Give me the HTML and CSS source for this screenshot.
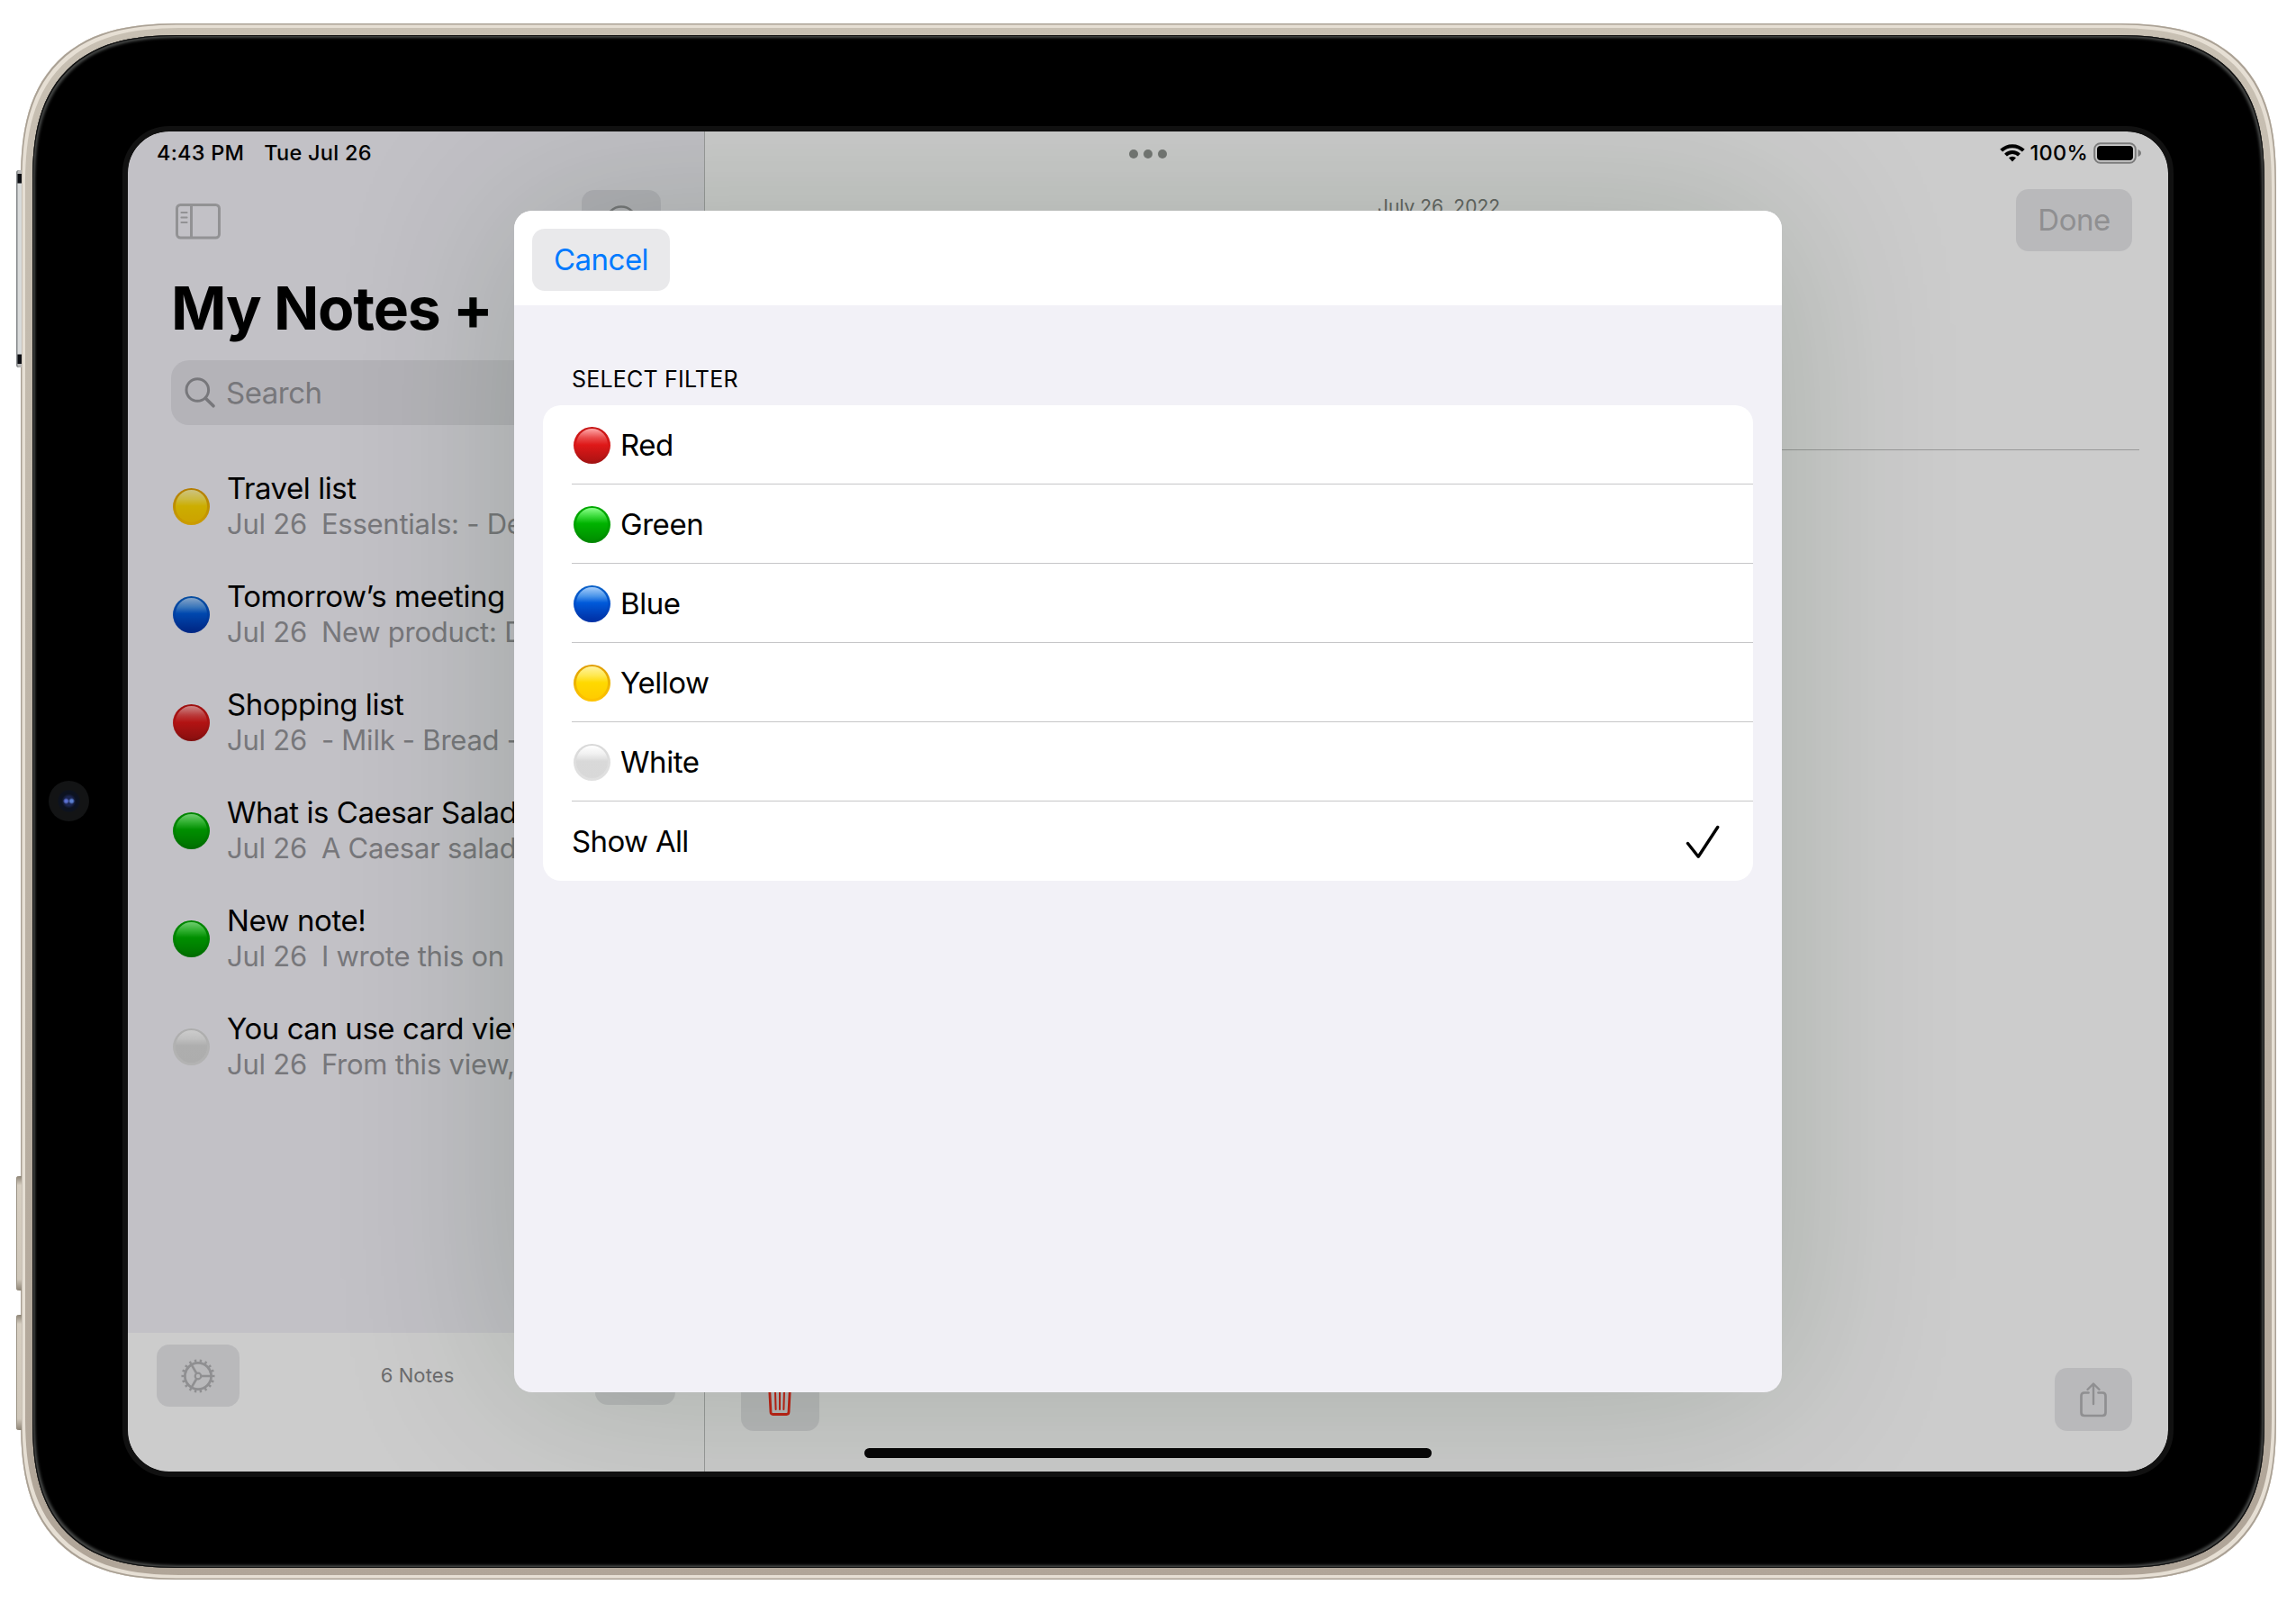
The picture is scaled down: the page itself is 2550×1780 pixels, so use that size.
FILE: index.html
```html
<!DOCTYPE html>
<html lang="en">
<head>
<meta charset="utf-8">
<title>My Notes +</title>
<link rel="stylesheet" href="styles.css">
</head>
<body>
<div class="device">
  <i class="side-key key-power"></i>
  <i class="side-key key-vol-up"></i>
  <i class="side-key key-vol-down"></i>
  <div class="glass">
    <i class="camera"></i>
    <div class="screen">
      <aside class="sidebar">
        <div class="sidebar-bar">
          <svg class="icon-sidebar" width="50" height="40" viewBox="0 0 50 40" fill="none" stroke="currentColor" stroke-width="3">
            <rect x="1.5" y="1.5" width="47" height="36.5" rx="4"/>
            <path d="M17.5 1.5v36.5"/>
            <path d="M6.500 10h6M6.500 15.500h6M6.500 21h6" stroke-width="2.200" stroke-linecap="round"/>
          </svg>
          <span class="tool tool-more">
            <svg width="38" height="38" viewBox="0 0 38 38" fill="none" stroke="currentColor" stroke-width="2.6"><circle cx="19" cy="19" r="16.5"/><path d="M11 19h.1M19 19h.1M27 19h.1" stroke-width="4" stroke-linecap="round"/></svg>
          </span>
        </div>
        <h1 class="title">My Notes +</h1>
        <div class="search">
          <svg width="36" height="36" viewBox="0 0 36 36" fill="none" stroke="currentColor" stroke-width="3" stroke-linecap="round"><circle cx="15.3" cy="15" r="12.3"/><path d="M24.3 24.2l8.7 8.6" stroke-width="3.6"/></svg>
          <span>Search</span>
        </div>
        <ul class="notes">
          <li><i class="ball yellow"></i><div><p class="note-title">Travel list</p><p class="note-sub"><span>Jul 26</span>Essentials: - Deodorant</p></div></li>
          <li><i class="ball blue"></i><div><p class="note-title">Tomorrow’s meeting</p><p class="note-sub"><span>Jul 26</span>New product: Design</p></div></li>
          <li><i class="ball red"></i><div><p class="note-title">Shopping list</p><p class="note-sub"><span>Jul 26</span>- Milk - Bread - Eggs</p></div></li>
          <li><i class="ball green"></i><div><p class="note-title">What is Caesar Salad?</p><p class="note-sub"><span>Jul 26</span>A Caesar salad is</p></div></li>
          <li><i class="ball green"></i><div><p class="note-title">New note!</p><p class="note-sub"><span>Jul 26</span>I wrote this on</p></div></li>
          <li><i class="ball white"></i><div><p class="note-title">You can use card view</p><p class="note-sub"><span>Jul 26</span>From this view, you</p></div></li>
        </ul>
        <footer class="sidebar-foot">
          <span class="tool tool-gear">
            <svg width="40" height="40" viewBox="-20 -20 40 40" fill="none" stroke="currentColor">
              <circle r="14.6" stroke-width="2.8"/>
              <circle r="16.9" stroke-width="3.2" pathLength="72" stroke-dasharray="1.6 2.4" stroke-dashoffset=".8"/>
              <circle r="3.3" stroke-width="2.2"/>
              <path d="M4 0H14M-2 -3.5L-7.2 -12.4M-2 3.5L-7.2 12.4" stroke-width="2.6"/>
            </svg>
          </span>
          <span class="count">6 Notes</span>
          <span class="tool tool-compose"></span>
        </footer>
      </aside>
      <main class="editor">
        <div class="editor-bar">
          <span></span>
          <span class="date">July 26, 2022</span>
          <span class="tool tool-done">Done</span>
        </div>
        <hr class="rule">
        <footer class="editor-foot">
          <span class="tool tool-trash">
            <svg width="34" height="40" viewBox="0 0 34 40" fill="none" stroke="currentColor" stroke-width="2.8" stroke-linejoin="round" stroke-linecap="round"><path d="M3 5h28M12 5V1h10v4M5.500 5l1.500 29q.1 2.500 2.500 2.500h15q2.400 0 2.500-2.500l1.500-29"/><path d="M12 11l.6 20M17 11v20M22 11l-.6 20" stroke-width="2"/></svg>
          </span>
          <span class="tool tool-share">
            <svg width="34" height="42" viewBox="0 0 34 42" fill="none" stroke="currentColor" stroke-width="2.7" stroke-linecap="round" stroke-linejoin="round"><path d="M11.500 13.500H7q-3.500 0-3.500 3.500v18.500q0 3.500 3.500 3.500h20q3.500 0 3.500-3.500V17q0-3.500-3.500-3.500h-4.500"/><path d="M17 26V4M10.500 10L17 3.500 23.500 10" stroke-width="2.4"/></svg>
          </span>
        </footer>
      </main>

      <div class="status">
        <div class="status-left"><span class="clock">4:43 PM</span><span class="day">Tue Jul 26</span></div>
        <div class="dots"><i></i><i></i><i></i></div>
        <div class="status-right">
          <svg width="28" height="21" viewBox="0 0 28 21" fill="none" stroke="#000" stroke-width="4"><path d="M1.700 8.200a17.500 17.500 0 0 1 24.600 0"/><path d="M6.500 13.200a10.600 10.600 0 0 1 15 0"/><path d="M14 20.500l-4-4.200a5.700 5.700 0 0 1 8 0z" fill="#000" stroke="none"/></svg>
          <span class="percent">100%</span>
          <svg width="54" height="24" viewBox="0 0 54 24"><rect x="1.200" y="1.200" width="45.600" height="21.600" rx="6.500" fill="none" stroke="#7c7c7c" stroke-width="2"/><rect x="4" y="4" width="40" height="16" rx="4" fill="#000"/><path d="M49.500 8q3.500 1.500 3.500 4t-3.500 4z" fill="#7c7c7c"/></svg>
        </div>
      </div>

      <section class="sheet">
        <header class="sheet-head"><span class="cancel">Cancel</span></header>
        <h2 class="sheet-label">SELECT FILTER</h2>
        <ul class="options">
          <li><div><i class="ball red"></i>Red</div></li>
          <li><div><i class="ball green"></i>Green</div></li>
          <li><div><i class="ball blue"></i>Blue</div></li>
          <li><div><i class="ball yellow"></i>Yellow</div></li>
          <li><div><i class="ball white"></i>White</div></li>
          <li><div class="all">Show All
            <svg width="38" height="38" viewBox="0 0 38 38" fill="none" stroke="#000" stroke-width="3.400" stroke-linecap="round" stroke-linejoin="round"><path d="M2.500 21.500l11.700 14.700L35.700 3.500"/></svg></div></li>
        </ul>
      </section>
      <i class="home"></i>
    </div>
  </div>
</div>
</body>
</html>
```
FILE: styles.css
```css
* { box-sizing: border-box; margin: 0; padding: 0; }
body {
  background: #fff;
  font-family: Inter, "Liberation Sans", sans-serif;
  color: #000;
  height: 1780px;
  overflow: hidden;
}
ul { list-style: none; }

/* hardware */
.device {
  position: relative;
  width: 2505px;
  height: 1728px;
  margin: 26px 0 0 23px;
  padding: 13px;
  border-radius: 150px;
  background: linear-gradient(180deg, #c8c0b3, #b0a598);
  box-shadow: inset 0 0 0 1.5px #aaa195, inset 0 0 0 5px #e6dfd4;
}
.glass {
  position: relative;
  height: 100%;
  padding: 107px 107px 107px 106px;
  border-radius: 137px;
  background: #000;
  box-shadow: inset 0 0 0 1px #111, inset 0 0 3px 3px #454746;
}
.screen {
  position: relative;
  display: flex;
  width: 2266px;
  height: 1488px;
  overflow: hidden;
  border-radius: 46px;
  background: #ccc;
  outline: 6px solid #111;
}
@supports (corner-shape: superellipse(1.4)) {
  .device { border-radius: 180px; corner-shape: superellipse(1.4); }
  .glass { border-radius: 167px; corner-shape: superellipse(1.4); }
}
.side-key {
  position: absolute;
  left: -5px;
  width: 6px;
  border-radius: 3px 0 0 3px;
  background: linear-gradient(180deg, #8d8476, #d6cec1 8%, #cfc7ba 90%, #8d8476);
  box-shadow: inset 1px 0 0 #9a9284;
}
.key-power {
  top: 163px;
  height: 219px;
  background: linear-gradient(180deg, #b8b8b8 0 4px, #0b0d12 4px 14px, #d8dada 15px 204px, #0b0d12 205px 215px, #b8b8b8 215px);
  box-shadow: inset 1.5px 0 0 #85888a;
}
.key-vol-up { top: 1280px; height: 127px; }
.key-vol-down { top: 1434px; height: 128px; }
.camera {
  position: absolute;
  left: 18px;
  top: 828px;
  width: 45px;
  height: 45px;
  border-radius: 50%;
  background:
    radial-gradient(circle at 19.500px 22.500px, #5a6fd0 0 1.500px, transparent 3.500px),
    radial-gradient(circle at 25.500px 22.500px, #5a7fd0 0 1.500px, transparent 3.500px),
    radial-gradient(circle, #1b2550 0 5px, #0c1220 8px 11px, #131415 13px);
}

/* shared controls */
.tool {
  display: flex;
  align-items: center;
  justify-content: center;
  height: 69px;
  border-radius: 14px;
  background: rgba(118, 118, 128, .21);
  color: #8f8f91;
}
.ball {
  position: relative;
  flex: none;
  width: 41px;
  height: 41px;
  border-radius: 50%;
}
.ball::before {
  content: "";
  position: absolute;
  inset: 2.500px 3px 3px;
  border-radius: 50%;
}
.red { background: linear-gradient(#c51414, #d81818 50%, #a01212); }
.red::before { background: linear-gradient(#ffa8a8, #e94a4a 28%, #df1818 50%, #b01313); }
.green { background: linear-gradient(#00a800, #00a400 50%, #008600); }
.green::before { background: linear-gradient(#8bff8b, #3ddc3d 25%, #00b300 48%, #008f00); }
.blue { background: linear-gradient(#0b62c8, #0050cc 50%, #0030a4); }
.blue::before { background: linear-gradient(#a6cdfa, #4a95ea 28%, #005ada 48%, #0032a8); }
.yellow { background: linear-gradient(#e09c00, #edb400 50%, #ffc400); }
.yellow::before { background: linear-gradient(#fff3a0, #ffe850 28%, #ffd900 50%, #ffcb00); }
.white { background: linear-gradient(#d8d8d8, #dedede 50%, #e0e0e0); }
.white::before { background: linear-gradient(#fff, #f1f1f1 25%, #d9d9d9 48%, #d8d8d8); }

/* notes list */
.sidebar {
  display: flex;
  flex-direction: column;
  flex: none;
  width: 641px;
  padding-top: 65px;
  background: #c2c1c6;
  border-right: 1px solid #9a9b9b;
}
.sidebar-bar {
  display: flex;
  align-items: center;
  justify-content: space-between;
  padding: 0 48px 0 53px;
}
.icon-sidebar { color: #929294; }
.tool-more { width: 88px; color: #77777a; }
.title {
  margin: 22px 0 0 48px;
  font-size: 66px;
  line-height: 80px;
  font-weight: 700;
  letter-spacing: -1.2px;
  white-space: nowrap;
}
.search {
  display: flex;
  align-items: center;
  gap: 11px;
  height: 72px;
  margin: 18px 48px 30px;
  padding-left: 14px;
  border-radius: 20px;
  background: rgba(100, 100, 108, .15);
  color: #77777b;
  font-size: 33px;
  letter-spacing: -.5px;
}
.notes { flex: 1; }
.notes li {
  display: flex;
  align-items: center;
  gap: 19px;
  height: 120px;
  padding-left: 50px;
}
.notes div { flex: 1; overflow: hidden; }
.notes p { line-height: 40px; white-space: nowrap; }
.notes .ball { filter: brightness(.8); }
.note-title { font-size: 33px; letter-spacing: -.45px; }
.note-sub { font-size: 31px; letter-spacing: -.25px; color: #77777b; }
.note-sub span { margin-right: 16px; }
.sidebar-foot {
  display: flex;
  align-items: flex-start;
  justify-content: space-between;
  height: 154px;
  padding: 13px 32px 0;
  background: #ccc;
}
.tool-gear { width: 92px; }
.tool-compose { width: 89px; height: 67px; }
.count { font-size: 22px; line-height: 69px; color: #6c6c6e; letter-spacing: .1px; }

/* editor */
.editor { display: flex; flex-direction: column; flex: 1; padding: 64px 40px 45px; }
.editor-bar { display: grid; grid-template-columns: 1fr auto 1fr; }
.date { padding-left: 5px; font-size: 21px; line-height: 40px; color: #646664; }
.tool-done { justify-self: end; width: 129px; padding-bottom: 1px; font-size: 33px; letter-spacing: -.5px; }
.rule { height: 1px; margin: 220px -8px 0 0; border: 0; background: #999; }
.editor-foot { display: flex; justify-content: space-between; margin-top: auto; }
.tool-trash { width: 87px; height: 70px; padding-right: 2px; color: #c02115; }
.tool-share { width: 86px; height: 70px; }

/* status bar floats over both panes */
.status {
  position: absolute;
  inset: 0 0 auto;
  display: grid;
  grid-template-columns: 1fr auto 1fr;
  align-items: center;
  height: 47px;
  padding: 0 29px;
  font-size: 23.500px;
  font-weight: 500;
  letter-spacing: .25px;
  white-space: nowrap;
}
.status-left { display: flex; gap: 22px; padding-left: 3px; }
.dots { display: flex; gap: 6px; padding-top: 3px; }
.dots i { width: 10px; height: 10px; border-radius: 50%; background: #757775; }
.status-right { display: flex; align-items: center; justify-content: flex-end; gap: 6px; }

/* filter sheet */
.sheet {
  position: absolute;
  left: 429px;
  top: 88px;
  width: 1408px;
  height: 1312px;
  border-radius: 20px;
  background: #f2f1f7;
  box-shadow: 0 0 200px rgba(10, 40, 10, .19);
}
.sheet-head {
  height: 105px;
  padding: 20px;
  border-radius: 20px 20px 0 0;
  background: #fff;
}
.cancel {
  display: block;
  width: 153px;
  height: 69px;
  border-radius: 14px;
  background: #e9e9eb;
  color: #007aff;
  font-size: 33px;
  line-height: 69px;
  letter-spacing: -.5px;
  text-align: center;
}
.sheet-label {
  padding: 62px 0 9px 64px;
  font-size: 25px;
  line-height: 40px;
  font-weight: 400;
  letter-spacing: .2px;
}
.options {
  margin: 0 32px;
  padding-left: 32px;
  border-radius: 20px;
  background: #fff;
  font-size: 33px;
  letter-spacing: -.45px;
}
.options li { height: 88px; border-bottom: 1px solid #c6c6c8; }
.options li:last-child { border-bottom: 0; }
.options div { display: flex; align-items: center; gap: 11px; height: 88px; padding-left: 2px; }
.options .all { justify-content: space-between; padding: 0 37px 0 0; letter-spacing: -.65px; }
.home {
  position: absolute;
  left: 818px;
  bottom: 15px;
  width: 630px;
  height: 11px;
  border-radius: 6px;
  background: #060606;
}
```
